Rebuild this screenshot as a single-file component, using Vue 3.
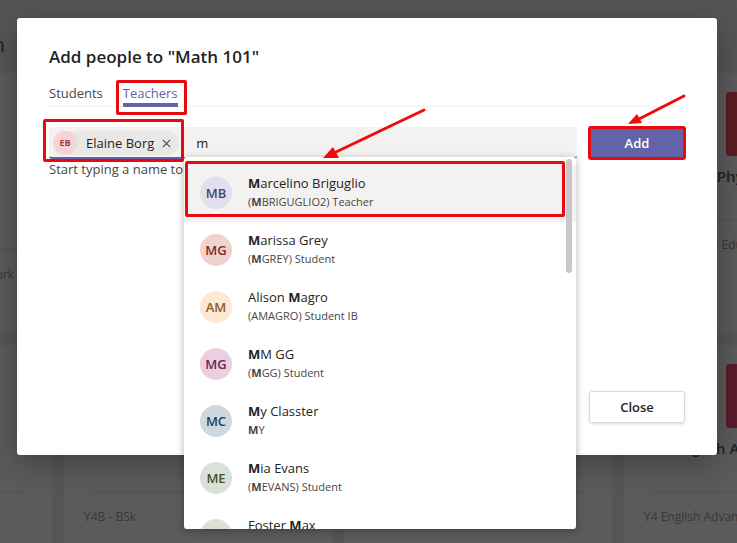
<script setup>
import { ref } from 'vue'

const activeTab = ref('Teachers')
const tabs = ['Students', 'Teachers']
const query = ref('m')
const selected = ref([{ initials: 'EB', name: 'Elaine Borg' }])

// name and account are split around the matching part
const people = [
  { initials: 'MB', name: ['', 'M', 'arcelino Briguglio'], account: ['(', 'M', 'BRIGUGLIO2) Teacher'], tone: 'violet' },
  { initials: 'MG', name: ['', 'M', 'arissa Grey'], account: ['(', 'M', 'GREY) Student'], tone: 'red' },
  { initials: 'AM', name: ['Alison ', 'M', 'agro'], account: ['(AMAGRO) Student IB', '', ''], tone: 'orange' },
  { initials: 'MG', name: ['', 'M', 'M GG'], account: ['(', 'M', 'GG) Student'], tone: 'pink' },
  { initials: 'MC', name: ['', 'M', 'y Classter'], account: ['', 'M', 'Y'], tone: 'blue' },
  { initials: 'ME', name: ['', 'M', 'ia Evans'], account: ['(', 'M', 'EVANS) Student'], tone: 'green' },
  { initials: 'FM', name: ['Foster ', 'M', 'ax'], account: ['(', 'M', 'AX) Student'], tone: 'green' }
]

const teams = [
  { lines: ['Math 101'], note: 'Y4 Math 101 - Classes and Homework', tile: 'grey', tall: true },
  { lines: ['Biology'], note: 'Y4 Biology', tile: 'grey' },
  { lines: ['Chemistry'], note: 'Y4 Chemistry', tile: 'grey' },
  { lines: ['Physics 101'], note: 'Y4 Physics 1 - Education', tile: 'red' },
  { lines: ['History'], note: '', tile: 'grey' },
  { lines: ['Y4B', 'BSk'], note: 'Y4B - BSk', tile: 'grey' },
  { lines: ['French'], note: '', tile: 'grey' },
  { lines: ['English Advanced Level'], note: 'Y4 English Advanced', tile: 'crimson' }
]

function removePerson(index) {
  selected.value.splice(index, 1)
}
</script>

<template>
  <div class="page">
    <div class="teams" aria-hidden="true">
      <div class="teams-header">Team selection</div>
      <div class="team-grid">
        <div v-for="(team, i) in teams" :key="i" class="team">
          <div class="team-main" :class="{ tall: team.tall }">
            <div class="tile" :class="team.tile"></div>
            <div class="team-name">
              <div v-for="line in team.lines" :key="line">{{ line }}</div>
            </div>
          </div>
          <div class="team-note">{{ team.note }}</div>
        </div>
      </div>
    </div>

    <div class="backdrop">
      <section class="dialog" role="dialog" aria-labelledby="dialog-title">
        <h1 id="dialog-title">Add people to "Math 101"</h1>

        <nav class="tabs">
          <button
            v-for="tab in tabs"
            :key="tab"
            class="tab"
            :class="{ active: tab === activeTab }"
            @click="activeTab = tab"
          >{{ tab }}</button>
        </nav>

        <div class="form-row">
          <div class="field">
            <div v-for="(person, i) in selected" :key="person.name" class="chip">
              <span class="chip-avatar">{{ person.initials }}</span>
              <span class="chip-name">{{ person.name }}</span>
              <button class="chip-remove" :aria-label="'Remove ' + person.name" @click="removePerson(i)">
                <svg width="9" height="9" viewBox="0 0 9 9">
                  <path d="M0.8 0.8 8.2 8.2M8.2 0.8 0.8 8.2" fill="none" stroke="#484644" stroke-width="1.1" />
                </svg>
              </button>
            </div>
            <input v-model="query" class="query" type="text" aria-label="Name" aria-describedby="hint" />

            <div class="menu">
              <ul>
                <li v-for="(p, i) in people" :key="i" class="option" :class="{ current: i === 0 }">
                  <span class="avatar" :class="p.tone">{{ p.initials }}</span>
                  <span class="person">
                    <span class="name">{{ p.name[0] }}<b>{{ p.name[1] }}</b>{{ p.name[2] }}</span>
                    <span class="account">{{ p.account[0] }}<b>{{ p.account[1] }}</b>{{ p.account[2] }}</span>
                  </span>
                </li>
              </ul>
              <div class="thumb"></div>
            </div>

            <svg class="arrow arrow-menu" width="106" height="54" viewBox="0 0 106 54">
              <path d="M102 3 14 45" stroke="#f00b0b" stroke-width="3" stroke-linecap="round" />
              <path d="M1 51 11 40 17 51Z" fill="#f00b0b" />
            </svg>
          </div>

          <div class="add-wrap">
            <button class="add">Add</button>
            <svg class="arrow arrow-add" width="60" height="34" viewBox="0 0 60 34">
              <path d="M57 3 12 26" stroke="#f00b0b" stroke-width="3" stroke-linecap="round" />
              <path d="M1 31 10 21 15 30Z" fill="#f00b0b" />
            </svg>
          </div>
        </div>
        <p id="hint" class="hint">Start typing a name to add a teacher</p>

        <div class="actions">
          <button class="close">Close</button>
        </div>
      </section>
    </div>
  </div>
</template>

<style>
body {
  margin: 0;
  background: #565656;
}
</style>

<style scoped>
* {
  box-sizing: border-box;
}

.page {
  position: relative;
  height: 100vh;
  overflow: hidden;
  font-family: 'Segoe UI', 'Open Sans', 'Noto Sans', sans-serif;
  font-size: 13px;
  line-height: 20px;
  color: #252423;
}

button {
  font: inherit;
  color: inherit;
  border: none;
  background: none;
  padding: 0;
  cursor: pointer;
}

/* dimmed team list behind the dialog */
.teams {
  position: absolute;
  inset: 0;
  overflow: hidden;
  background: #555;
}

.teams-header {
  display: flex;
  align-items: center;
  justify-content: flex-end;
  width: 5px;
  height: 73px;
  padding-top: 16px;
  font-size: 20px;
  white-space: nowrap;
  color: #1f1f1f;
}

.team-grid {
  display: grid;
  grid-template-columns: repeat(4, 268px);
  grid-auto-rows: 260px;
  gap: 12px;
  margin-left: -216px;
}

.team {
  background: #5b5b5b;
  border-radius: 3px;
}

.team-main {
  height: 147px;
  margin: 0 28px;
  padding-top: 19px;
  border-bottom: 1px solid #525252;
}
.team-main.tall { height: 177px; }

.tile {
  width: 64px;
  height: 64px;
  margin: 0 auto 9px;
  border-radius: 3px;
}
.tile.grey { background: #4d4d4d; }
.tile.red { background: #5d1c20; }
.tile.crimson { background: #5a1c2c; }

.team-name {
  font-size: 15px;
  font-weight: 600;
  line-height: 22px;
  text-align: center;
  white-space: nowrap;
  color: #222;
}

.team-note {
  padding: 15px 20px;
  font-size: 12px;
  white-space: nowrap;
  color: #383838;
}

.backdrop {
  position: relative;
  display: flex;
  height: 100%;
  padding: 18px 20px 88px 17px;
}

.dialog {
  display: flex;
  flex-direction: column;
  flex: 1;
  padding: 27px 32px;
  padding-bottom: 32px;
  background: #fff;
  border-radius: 3px;
  box-shadow: 0 8px 32px rgba(0, 0, 0, 0.3);
}

h1 {
  margin: 0;
  font-size: 17px;
  font-weight: 600;
  line-height: 24px;
}

.tabs {
  display: flex;
  gap: 20px;
  margin-top: 14px;
  border-bottom: 1px solid #f0f0f0;
}

.tab {
  height: 24px;
  margin-bottom: -1px;
  padding-bottom: 4px;
  color: #484644;
}
.tab.active {
  position: relative;
  padding-bottom: 0;
  border-bottom: 4px solid #6264a7;
  color: #6264a7;
}

/* red frames */
.tab.active::after,
.chip::after,
.option.current::before {
  content: '';
  position: absolute;
  border: 3px solid #e60b10;
  border-radius: 2px;
  pointer-events: none;
}
.tab.active::after { inset: -3px -9px -12px -7px; }
.chip::after { inset: -12px -5px -7px -10px; }
.option.current::before {
  inset: -4px 11px 5px 1px;
  z-index: -1;
  background: #f3f2f1;
}

.form-row {
  display: flex;
  gap: 12px;
  margin-top: 20px;
}

.field {
  position: relative;
  display: flex;
  flex: 1;
  gap: 17px;
  height: 32px;
  padding: 4px 0 0 4px;
  background: #f3f2f1;
  border-bottom: 2px solid #6264a7;
  border-radius: 3px;
}

.chip {
  position: relative;
  display: flex;
  align-items: center;
  height: 24px;
  padding-right: 8px;
  background: #eae8e7;
  border-radius: 12px;
}

.chip-avatar {
  width: 24px;
  height: 24px;
  margin-right: 9px;
  border-radius: 50%;
  background: #f7d3d6;
  color: #94404a;
  font-size: 9px;
  font-weight: 700;
  line-height: 24px;
  text-align: center;
}

.chip-remove {
  display: flex;
  margin-left: 8px;
}

.query {
  flex: 1;
  min-width: 0;
  height: 24px;
  padding: 0;
  border: none;
  outline: none;
  background: transparent;
  font: inherit;
  color: #252423;
}

.menu {
  position: absolute;
  top: 30px;
  left: 135px;
  right: 1px;
  max-height: 372px;
  overflow: hidden;
  background: #fff;
  border-radius: 3px;
  box-shadow: 0 2px 8px rgba(0, 0, 0, 0.3);
}

.menu ul {
  margin: 0;
  padding: 8px 0;
  list-style: none;
}

.option {
  position: relative;
  display: flex;
  gap: 16px;
  height: 57px;
  padding: 12px 16px;
}
.option.current {
  z-index: 0;
  background: #f3f2f1;
}

.avatar {
  width: 32px;
  height: 32px;
  border-radius: 50%;
  font-weight: 600;
  line-height: 32px;
  text-align: center;
}
.violet { background: #e1dfee; color: #474468; }
.red { background: #f1d3cd; color: #7d2b1e; }
.orange { background: #fce8d3; color: #8f5a2c; }
.pink { background: #e9cfe0; color: #6b2456; }
.blue { background: #ced9df; color: #22414f; }
.green { background: #dbe1d7; color: #3c5329; }

.person {
  display: flex;
  flex-direction: column;
  margin-top: -4px;
}
.name { line-height: 20px; }
.account {
  font-size: 11px;
  line-height: 17px;
  color: #484644;
}

.thumb {
  position: absolute;
  top: 2px;
  right: 4px;
  width: 6px;
  height: 114px;
  border-radius: 3px;
  background: #c8c8c8;
}

.add-wrap {
  position: relative;
}

.add {
  width: 96px;
  height: 32px;
  background: #6264a7;
  border-radius: 2px;
  color: #fff;
  font-weight: 600;
  outline: 3px solid #e60b10;
  outline-offset: -2px;
}

.arrow {
  position: absolute;
  fill: none;
  pointer-events: none;
}
.arrow-menu {
  top: -20px;
  left: 273px;
}
.arrow-add {
  top: -34px;
  left: 38px;
}

.hint {
  margin: 0;
  color: #484644;
}

.actions {
  display: flex;
  justify-content: flex-end;
  margin-top: auto;
}

.close {
  width: 96px;
  height: 32px;
  border: 1px solid #dcdad8;
  border-radius: 3px;
  background: #fff;
  font-weight: 600;
  box-shadow: 0 1px 3px rgba(0, 0, 0, 0.15);
}
</style>
